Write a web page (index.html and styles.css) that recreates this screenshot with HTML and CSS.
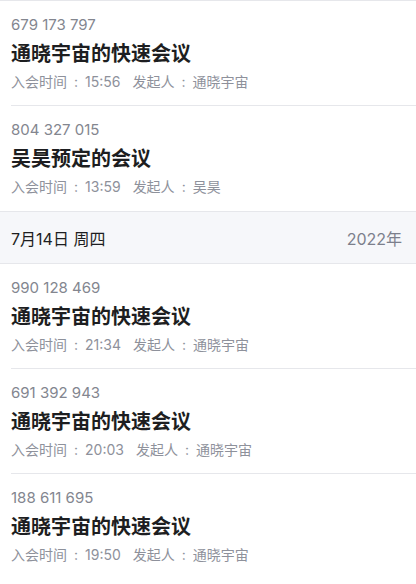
FILE: index.html
```html
<!DOCTYPE html>
<html lang="zh-CN">
<head>
<meta charset="utf-8">
<link rel="stylesheet" href="styles.css">
</head>
<body>
<div class="list">
  <div class="group">
    <div class="item">
      <div class="num">679 173 797</div>
      <div class="title">通晓宇宙的快速会议</div>
      <div class="meta">
        <span class="field"><span>入会时间</span><span class="sep">:</span><span>15:56</span></span>
        <span class="field"><span>发起人</span><span class="sep">:</span><span>通晓宇宙</span></span>
      </div>
    </div>
    <div class="item">
      <div class="num">804 327 015</div>
      <div class="title">吴昊预定的会议</div>
      <div class="meta">
        <span class="field"><span>入会时间</span><span class="sep">:</span><span>13:59</span></span>
        <span class="field"><span>发起人</span><span class="sep">:</span><span>吴昊</span></span>
      </div>
    </div>
  </div>
  <div class="day">
    <span class="date">7月14日 周四</span>
    <span class="year">2022年</span>
  </div>
  <div class="group">
    <div class="item">
      <div class="num">990 128 469</div>
      <div class="title">通晓宇宙的快速会议</div>
      <div class="meta">
        <span class="field"><span>入会时间</span><span class="sep">:</span><span>21:34</span></span>
        <span class="field"><span>发起人</span><span class="sep">:</span><span>通晓宇宙</span></span>
      </div>
    </div>
    <div class="item">
      <div class="num">691 392 943</div>
      <div class="title">通晓宇宙的快速会议</div>
      <div class="meta">
        <span class="field"><span>入会时间</span><span class="sep">:</span><span>20:03</span></span>
        <span class="field"><span>发起人</span><span class="sep">:</span><span>通晓宇宙</span></span>
      </div>
    </div>
    <div class="item">
      <div class="num">188 611 695</div>
      <div class="title">通晓宇宙的快速会议</div>
      <div class="meta">
        <span class="field"><span>入会时间</span><span class="sep">:</span><span>19:50</span></span>
        <span class="field"><span>发起人</span><span class="sep">:</span><span>通晓宇宙</span></span>
      </div>
    </div>
  </div>
</div>
</body>
</html>
```
FILE: styles.css
```css
html, body {
  margin: 0;
  padding: 0;
  background: #ffffff;
}
body {
  font-family: Inter, "Noto Sans CJK SC", sans-serif;
  width: 416px;
  height: 584px;
  overflow: hidden;
}
.list {
  border-top: 1px solid #e6e7eb;
}
.group {
  padding-left: 11px;
}
.item {
  padding: 13px 0 13px 0;
  border-bottom: 1px solid #e6e7eb;
}
.group .item:last-child {
  border-bottom: none;
  padding-bottom: 14px;
}
.num {
  height: 22px;
  font-size: 15px;
  line-height: 22px;
  color: #83868f;
}
.title {
  height: 28px;
  margin-top: 4px;
  font-size: 20px;
  line-height: 28px;
  font-weight: 700;
  color: #1d1e21;
}
.meta {
  height: 20px;
  margin-top: 4px;
  font-size: 14px;
  line-height: 20px;
  color: #8e919b;
  display: flex;
  gap: 12px;
}
.field {
  display: flex;
}
.sep {
  margin: 0 7px;
}
.day {
  display: flex;
  justify-content: space-between;
  align-items: center;
  height: 51px;
  padding: 0 14px 0 11px;
  background: #f6f7fa;
  border-top: 1px solid #e6e7eb;
  border-bottom: 1px solid #e6e7eb;
}
.date {
  font-size: 16px;
  color: #1d1e21;
}
.year {
  font-size: 16px;
  color: #7c7f8c;
}
```
